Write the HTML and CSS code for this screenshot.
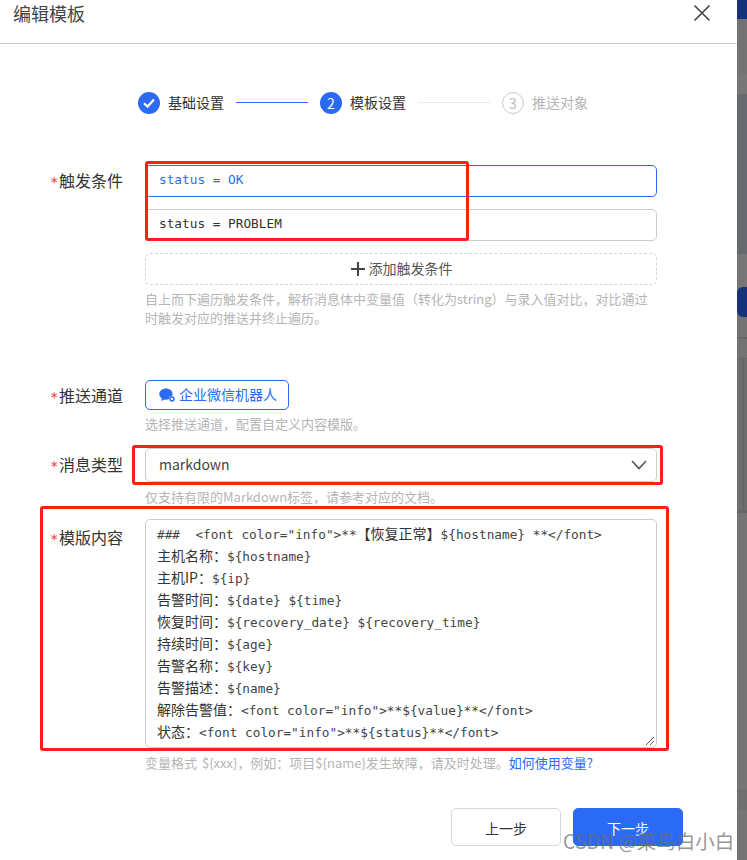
FILE: index.html
```html
<!DOCTYPE html>
<html lang="zh-CN">
<head>
<meta charset="utf-8">
<title>编辑模板</title>
<link rel="stylesheet" href="styles.css">
</head>
<body>
<div class="page">
  <main class="modal">
    <header class="modal-head">
      <h1 class="modal-title">编辑模板</h1>
      <svg class="close" width="18" height="18" viewBox="0 0 18 18"><path d="M1.5 1.5 16.5 16.5M16.5 1.5 1.5 16.5" fill="none" stroke="#444" stroke-width="1.6"/></svg>
    </header>

    <ol class="steps">
      <li class="step">
        <span class="dot dot-on"><svg width="14" height="12" viewBox="0 0 14 12"><path d="M2 6.2 5.6 9.6 12 2.6" fill="none" stroke="#fff" stroke-width="2.2"/></svg></span>
        <span class="step-text">基础设置</span>
        <span class="step-line line-on"></span>
      </li>
      <li class="step">
        <span class="dot dot-on">2</span>
        <span class="step-text">模板设置</span>
        <span class="step-line"></span>
      </li>
      <li class="step step-off">
        <span class="dot dot-off">3</span>
        <span class="step-text">推送对象</span>
      </li>
    </ol>

    <form class="form">
      <div class="row row-trigger">
        <label class="label"><i class="req">*</i>触发条件</label>
        <div class="field">
          <div class="input input-active">status = OK</div>
          <div class="input">status = PROBLEM</div>
          <div class="add">
            <svg width="14" height="14" viewBox="0 0 14 14"><path d="M7 0V14M0 7H14" fill="none" stroke="#444" stroke-width="2"/></svg>
            <span class="add-text">添加触发条件</span>
          </div>
          <p class="help help-trigger">自上而下遍历触发条件，解析消息体中变量值（转化为string）与录入值对比，对比通过时触发对应的推送并终止遍历。</p>
        </div>
      </div>

      <div class="row row-channel">
        <label class="label"><i class="req">*</i>推送通道</label>
        <div class="field">
          <div class="channel">
            <svg width="17" height="15" viewBox="0 0 17 15"><path d="M7 .5C3.2.5.3 2.9.3 6c0 1.8 1 3.300 2.500 4.300L2.400 13l3-1.500c.5.100 1 .2 1.600.2 3.800 0 6.500-2.500 6.500-5.700S10.800.5 7 .5Z" fill="#2b6af5"/><circle cx="13" cy="11" r="3" fill="#fff"/><circle cx="13" cy="11" r="2" fill="none" stroke="#2b6af5" stroke-width="1.400"/></svg>
            <span class="channel-text">企业微信机器人</span>
          </div>
          <p class="help help-channel">选择推送通道，配置自定义内容模版。</p>
        </div>
      </div>

      <div class="row row-type">
        <label class="label label-type"><i class="req">*</i>消息类型</label>
        <div class="field">
          <div class="select">
            <span class="select-text">markdown</span>
            <svg width="16" height="10" viewBox="0 0 16 10"><path d="M1 1 8 8.500 15 1" fill="none" stroke="#555" stroke-width="1.600"/></svg>
          </div>
          <p class="help help-type">仅支持有限的Markdown标签，请参考对应的文档。</p>
        </div>
      </div>

      <div class="row row-content">
        <label class="label label-content"><i class="req">*</i>模版内容</label>
        <div class="field">
          <div class="textarea">
            <div class="tline"><code>###  &lt;font color="info"&gt;**</code>【恢复正常】<code>${hostname} **&lt;/font&gt;</code></div>
            <div class="tline">主机名称：<code>${hostname}</code></div>
            <div class="tline">主机IP：<code>${ip}</code></div>
            <div class="tline">告警时间：<code>${date} ${time}</code></div>
            <div class="tline">恢复时间：<code>${recovery_date} ${recovery_time}</code></div>
            <div class="tline">持续时间：<code>${age}</code></div>
            <div class="tline">告警名称：<code>${key}</code></div>
            <div class="tline">告警描述：<code>${name}</code></div>
            <div class="tline">解除告警值：<code>&lt;font color="info"&gt;**${value}**&lt;/font&gt;</code></div>
            <div class="tline">状态：<code>&lt;font color="info"&gt;**${status}**&lt;/font&gt;</code></div>
            <svg class="grip" width="10" height="10" viewBox="0 0 10 10"><path d="M9 1 1 9M9 5 5 9" fill="none" stroke="#666" stroke-width="1"/></svg>
          </div>
          <p class="help help-content">变量格式 ${xxx}，例如：项目${name}发生故障，请及时处理。<a class="link">如何使用变量?</a></p>
        </div>
      </div>

      <div class="actions">
        <button type="button" class="btn">上一步</button>
        <button type="button" class="btn btn-primary">下一步</button>
      </div>
    </form>

    <div class="mark mark-1"></div>
    <div class="mark mark-2"></div>
    <div class="mark mark-3"></div>
  </main>

  <aside class="backdrop">
    <div class="seg s1"></div>
    <div class="seg s2"></div>
    <div class="seg s3"></div>
    <div class="seg s4"></div>
    <div class="seg s3 s5"></div>
    <div class="seg s6"></div>
    <div class="seg s7"></div>
    <div class="seg s8"></div>
    <div class="seg s7b"></div>
    <div class="seg s9"></div>
    <div class="seg s10"></div>
    <div class="seg s11"></div>
    <div class="seg s12"></div>
    <div class="seg s13"></div>
  </aside>
  <div class="watermark">CSDN @菜鸟白小白</div>
</div>
</body>
</html>
```
FILE: styles.css
```css
* { box-sizing: border-box; }
html, body { margin: 0; padding: 0; background: #fff; }
body { font-family: "Noto Sans CJK SC", "Noto Sans", sans-serif; color: #333; }
p, h1, ol { margin: 0; padding: 0; }

.page { position: relative; display: flex; width: 747px; height: 860px; overflow: hidden; }
.modal { position: relative; width: 737px; height: 860px; flex: none; background: #fff; }

.modal-head { display: flex; justify-content: space-between; align-items: flex-start; height: 44px; padding: 0 26px 0 13px; border-bottom: 1px solid #ccc; }
.modal-title { font-size: 18px; font-weight: 400; line-height: 26px; color: #444; }
.close { margin-top: 4px; }

.steps { display: flex; list-style: none; margin: 48px 0 0 138px; height: 22px; }
.step { display: flex; align-items: center; font-size: 14px; color: #333; line-height: 20px; }
.step-off { color: #b5b5b5; }
.dot { display: flex; align-items: center; justify-content: center; width: 22px; height: 22px; border-radius: 50%; font-size: 14px; }
.dot-on { background: #2b6af5; color: #fff; }
.dot-off { border: 1px solid #ccc; color: #bbb; }
.step-text { margin-left: 8px; width: 56px; padding-bottom: 2px; box-sizing: content-box; }
.step-line { width: 72px; height: 1px; margin: 0 12px; background: #e8e8e8; position: relative; top: -1px; }
.line-on { background: #2b6af5; }

.form { margin-top: 51px; }
.row { display: grid; grid-template-columns: 145px 512px; }
.label { display: block; font-size: 16px; line-height: 30px; color: #333; padding-left: 50px; white-space: nowrap; }
.label-type { padding-top: 1px; }
.label-content { padding-top: 3px; }
.req { font-family: "DejaVu Sans Mono", monospace; font-style: normal; font-size: 14px; color: #f5313a; display: inline-block; width: 9px; }

.input { height: 32px; margin-bottom: 12px; padding: 0 13px; border: 1px solid #ccc; border-radius: 5px; font-family: "DejaVu Sans Mono", monospace; font-size: 12.75px; line-height: 27px; color: #333; }
.input-active { border-color: #2b6af5; color: #2b6af5; }
.add { display: flex; align-items: center; justify-content: center; gap: 4px; height: 32px; padding-left: 1px; border: 1px dashed #d4d4d4; border-radius: 5px; font-size: 14px; color: #555; }
.add-text { padding-bottom: 2px; }

.help { font-size: 13px; line-height: 19px; color: #b5b5b5; }
.help-trigger { margin-top: 4px; }
.help-channel { margin-top: 4px; }
.help-type { margin-top: 5px; }
.help-content { margin-top: 5px; word-spacing: 2px; }
.link { color: #2b6af5; }

.row-channel { margin-top: 53px; }
.row-type { margin-top: 15px; }
.row-content { margin-top: 13px; }

.channel { display: inline-flex; align-items: center; gap: 3px; height: 30px; width: 144px; padding-left: 13px; border: 1px solid #2b6af5; border-radius: 5px; font-size: 14px; color: #2b6af5; vertical-align: top; }
.channel-text { padding-bottom: 2px; }
.select { display: flex; align-items: center; justify-content: space-between; height: 34px; padding: 0 9px 0 13px; border: 1px solid #ccc; border-radius: 5px; font-size: 14px; color: #444; }
.select-text { padding-bottom: 3px; }

.textarea { position: relative; height: 229px; padding: 2px 11px 0; border: 1px solid #ccc; border-radius: 5px; font-size: 14px; color: #333; }
.tline { height: 22px; line-height: 22px; white-space: pre; }
.tline code { font-family: "DejaVu Sans Mono", monospace; font-size: 12.75px; color: #444; }
.grip { position: absolute; right: 1px; bottom: 1px; }

.actions { display: flex; gap: 12px; margin: 36px 0 0 451px; }
.btn { width: 110px; height: 38px; padding: 2px 0 0; border: 1px solid #d6d6d6; border-radius: 5px; background: #fff; font-family: inherit; font-size: 14px; color: #333; }
.btn-primary { border-color: #2b6af5; background: #2b6af5; color: #fff; }

.mark { position: absolute; border: 3px solid #fa1f17; border-radius: 3px; pointer-events: none; }
.mark-1 { left: 145px; top: 161px; width: 324px; height: 80px; }
.mark-2 { left: 132px; top: 445px; width: 531px; height: 40px; }
.mark-3 { left: 40px; top: 506px; width: 629px; height: 245px; }

.backdrop { flex: none; width: 10px; height: 860px; background: #757575; }
.seg { width: 100%; }
.s1 { height: 19px; background: #15317a; }
.s2 { height: 54px; background: #727272; }
.s3 { height: 21px; background: #777; }
.s4 { height: 160px; background: #666a6e; }
.s5 { height: 33px; }
.s6 { height: 30px; background: #15317a; border-radius: 6px 0 0 6px; }
.s7 { height: 20px; background: #737373; }
.s8 { height: 2px; background: #666; }
.s7b { height: 20px; background: #737373; border-bottom: 1px solid #666; }
.s9 { height: 152px; background: #6e6e6e; box-shadow: inset -3px 0 0 #6e6e6e, inset -4px 0 0 #636363; border-bottom: 1px solid #666; }
.s10 { height: 2px; background: #666; }
.s11 { height: 276px; background: #757575; }
.s12 { height: 21px; background: #6f6f6f; }
.s13 { height: 49px; background: #757575; }

.watermark { position: absolute; left: 563px; top: 827px; font-size: 19.5px; line-height: 28px; color: rgba(110, 110, 110, 0.72); white-space: nowrap; pointer-events: none; }
```
